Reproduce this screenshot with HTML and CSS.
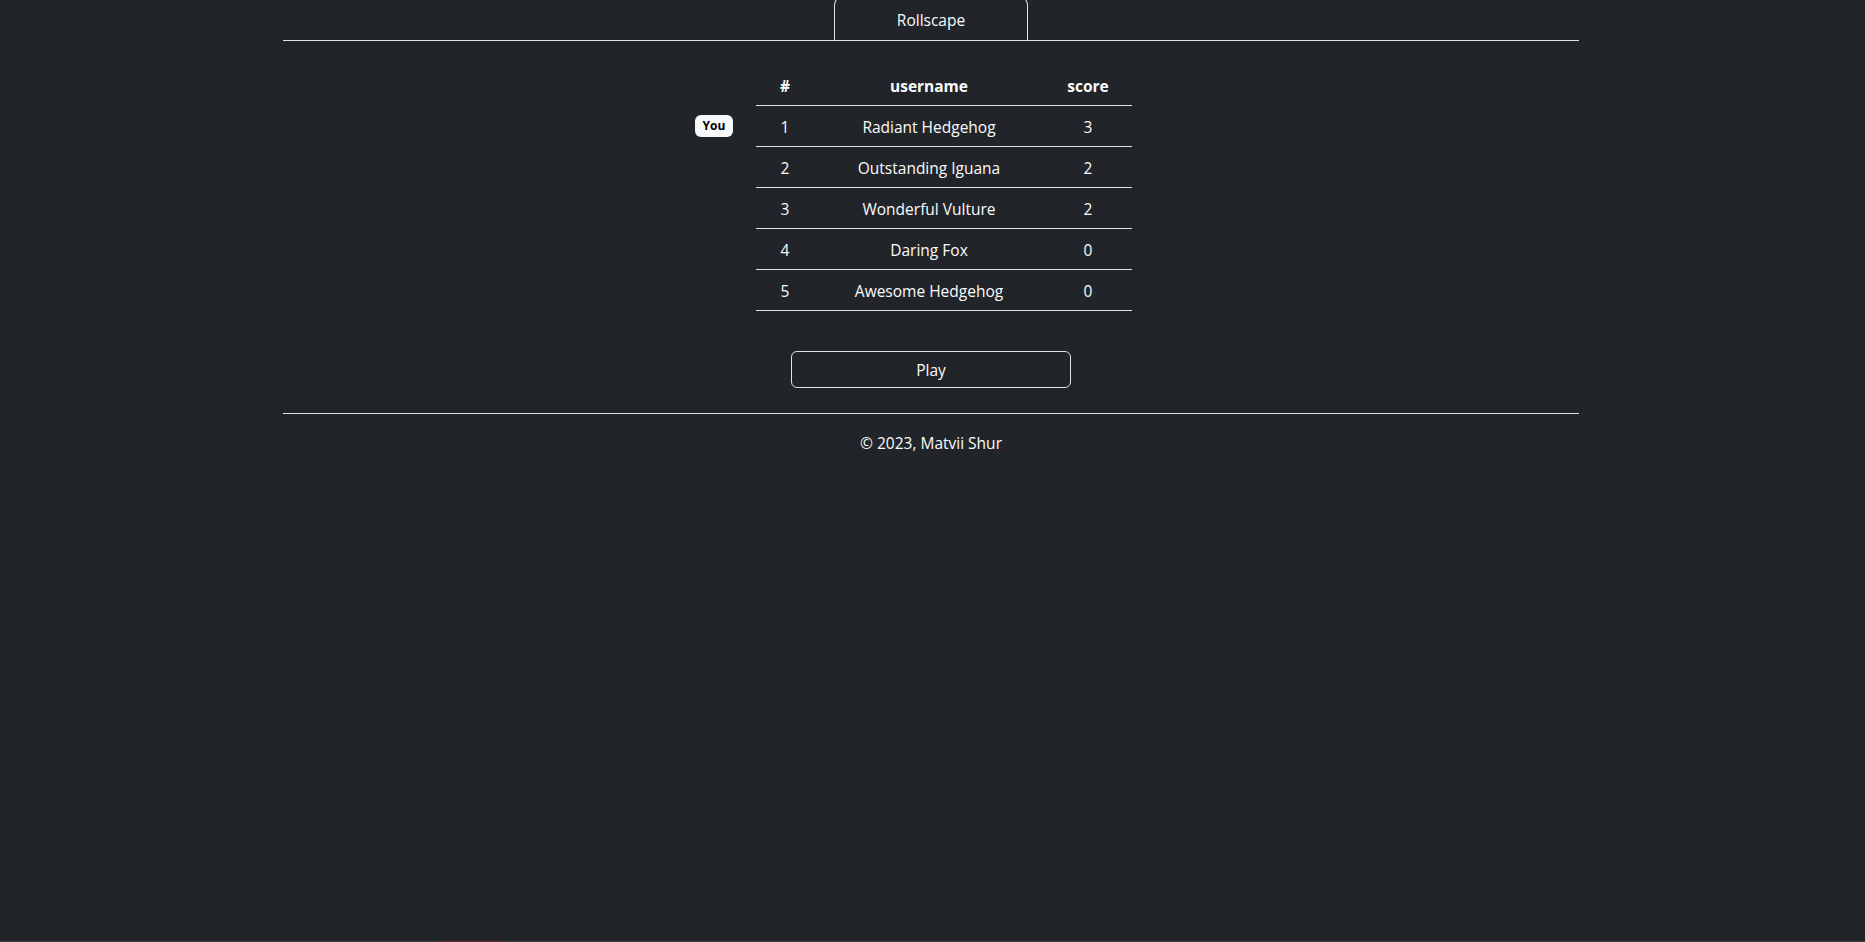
FILE: index.html
```html
<!DOCTYPE html>
<html lang="en">
<head>
<meta charset="utf-8">
<title>Rollscape</title>
<link rel="stylesheet" href="styles.css">
</head>
<body>
<div class="page">
  <header class="site-header">
    <div class="brand-tab">Rollscape</div>
  </header>
  <main class="main">
    <table class="board">
      <thead>
        <tr>
          <th class="tag"></th>
          <th class="c-rank">#</th>
          <th class="c-name">username</th>
          <th class="c-score">score</th>
        </tr>
      </thead>
      <tbody>
        <tr>
          <td class="tag"><span class="you">You</span></td>
          <td>1</td><td>Radiant Hedgehog</td><td>3</td>
        </tr>
        <tr>
          <td class="tag"></td>
          <td>2</td><td>Outstanding Iguana</td><td>2</td>
        </tr>
        <tr>
          <td class="tag"></td>
          <td>3</td><td>Wonderful Vulture</td><td>2</td>
        </tr>
        <tr>
          <td class="tag"></td>
          <td>4</td><td>Daring Fox</td><td>0</td>
        </tr>
        <tr>
          <td class="tag"></td>
          <td>5</td><td>Awesome Hedgehog</td><td>0</td>
        </tr>
      </tbody>
    </table>
    <button class="play-btn" type="button">Play</button>
  </main>
  <footer class="site-footer">© 2023, Matvii Shur</footer>
</div>
<div class="bottom-strip"><span class="bottom-mark"></span></div>
</body>
</html>
```

FILE: styles.css
```css
html, body {
  margin: 0;
  padding: 0;
  background: #212529;
  color: #fbfbfc;
  font-family: "Open Sans", "Liberation Sans", sans-serif;
  font-size: 15.5px;
  line-height: 24px;
}

.page {
  width: 1296px;
  margin-left: calc(50% - 649.5px);
  margin-right: auto;
}

.site-header {
  display: flex;
  justify-content: center;
  border-bottom: 1px solid #dee2e6;
}

.brand-tab {
  box-sizing: border-box;
  width: 194px;
  margin-top: -4px;
  padding: 11px 0 8px;
  border: 1px solid #dee2e6;
  border-bottom: none;
  border-radius: 9px 9px 0 0;
  text-align: center;
}

.main {
  display: flex;
  flex-direction: column;
  align-items: center;
  padding-top: 23px;
  padding-bottom: 25px;
  border-bottom: 1px solid #dee2e6;
}

.board {
  border-collapse: collapse;
  table-layout: fixed;
  width: 402px;
  margin-bottom: 40px;
}

.board th,
.board td {
  box-sizing: border-box;
  padding: 9px 0 7px;
  text-align: center;
  border-bottom: 1px solid #dee2e6;
  height: 41px;
}

.board th {
  font-weight: 700;
  padding: 10px 0 6px;
}

.board .tag {
  width: 26px;
  border-bottom: none;
  position: relative;
  padding: 0;
}

.c-rank { width: 58px; }
.c-name { width: 230px; }
.c-score { width: 88px; }

.you {
  position: absolute;
  right: 23px;
  top: 50%;
  transform: translateY(-50%);
  width: 38px;
  height: 22px;
  line-height: 22px;
  background: #f8f9fa;
  color: #000;
  border-radius: 6px;
  font-size: 12px;
  font-weight: 700;
  text-align: center;
}

.play-btn {
  box-sizing: border-box;
  width: 280px;
  height: 37px;
  background: transparent;
  color: #fbfbfc;
  border: 1px solid #dee2e6;
  border-radius: 6px;
  font-family: inherit;
  font-size: 15.5px;
  line-height: 24px;
  padding: 2px 0 0;
}

.site-footer {
  text-align: center;
  padding-top: 17px;
}

.bottom-strip {
  position: fixed;
  left: 0;
  right: 0;
  bottom: 0;
  height: 1px;
  background: #3a3d42;
}

.bottom-mark {
  position: absolute;
  left: 439px;
  width: 61px;
  height: 1px;
  background: #6e2c3a;
}
```
